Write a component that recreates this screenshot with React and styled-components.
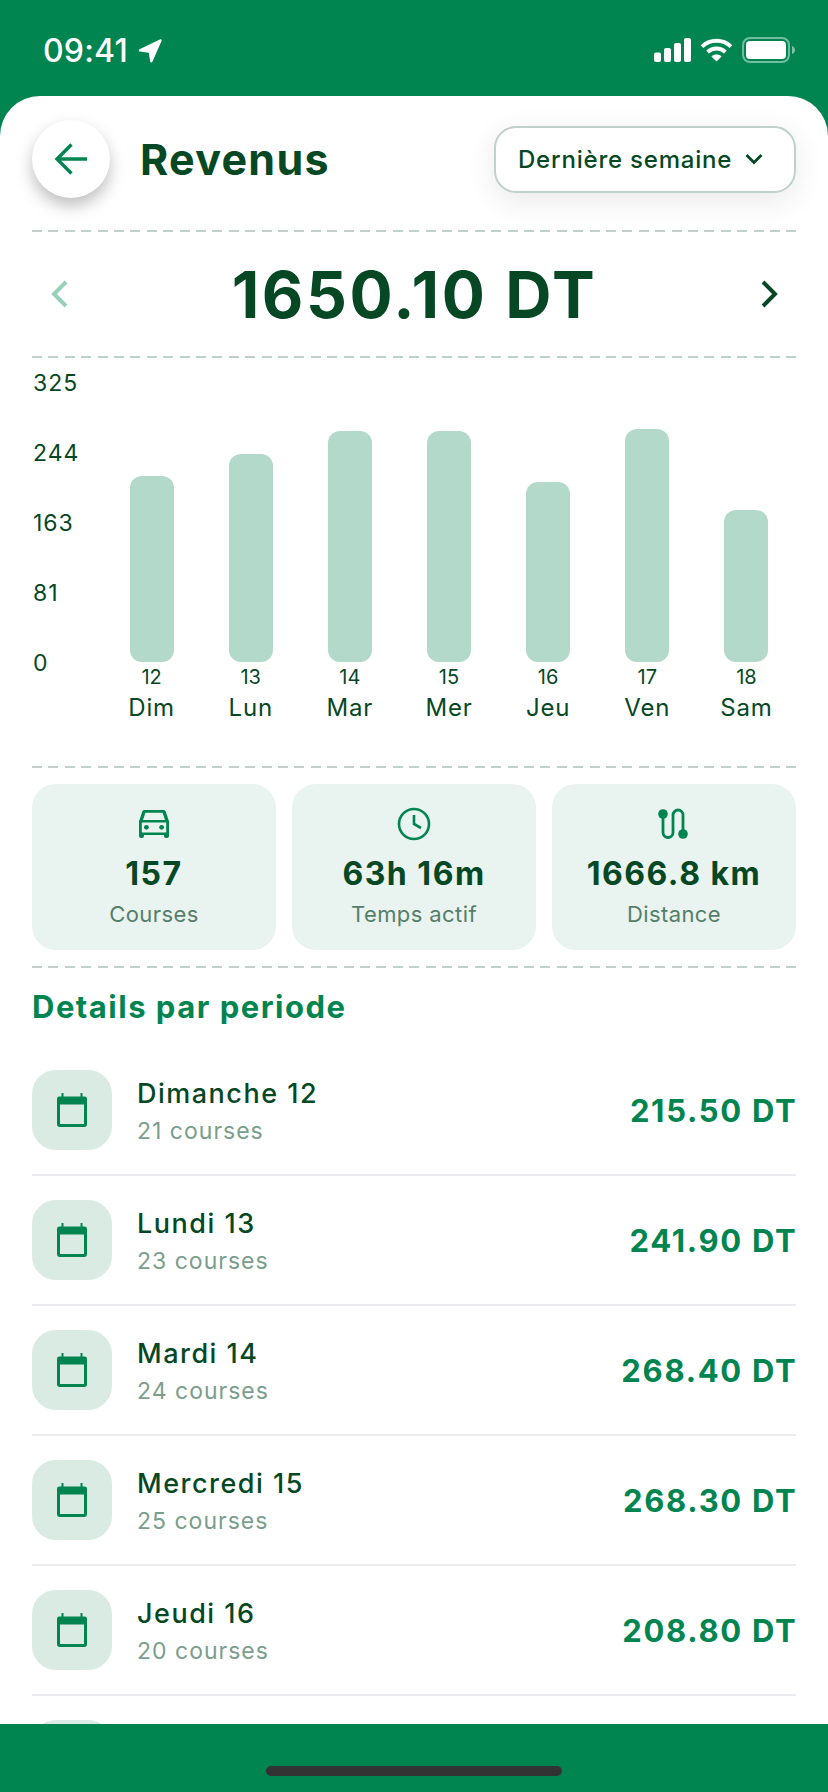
import styled, { createGlobalStyle } from "styled-components";

const GREEN = "#008551";
const DARK = "#064824";

const GlobalStyle = createGlobalStyle`
  html, body {
    margin: 0;
    padding: 0;
    background: ${GREEN};
  }
  * {
    box-sizing: border-box;
  }
`;

const days = [
  { num: 12, short: "Dim", long: "Dimanche", rides: 21, amount: 215.5 },
  { num: 13, short: "Lun", long: "Lundi", rides: 23, amount: 241.9 },
  { num: 14, short: "Mar", long: "Mardi", rides: 24, amount: 268.4 },
  { num: 15, short: "Mer", long: "Mercredi", rides: 25, amount: 268.3 },
  { num: 16, short: "Jeu", long: "Jeudi", rides: 20, amount: 208.8 },
  { num: 17, short: "Ven", amount: 270.4 },
  { num: 18, short: "Sam", amount: 177 },
];

const ticks = [325, 244, 163, 81, 0];
const PLOT_HEIGHT = 280;

const BackIcon = () => (
  <svg width="34" height="34" viewBox="0 0 34 34" fill="none" stroke={GREEN} strokeWidth="3.4">
    <path d="M33 17H3" />
    <path d="M17.500 2.500 3 17l14.500 14.500" />
  </svg>
);

const ChevronDown = () => (
  <svg width="20" height="12" viewBox="0 0 20 12" fill="none" stroke={DARK} strokeWidth="2.8">
    <path d="M2.500 2 10 9.500 17.500 2" />
  </svg>
);

const Chevron = ({ left, color }) => (
  <svg width="20" height="30" viewBox="0 0 20 30" fill="none" stroke={color} strokeWidth="4">
    <path d={left ? "M17 3 5 15l12 12" : "M3 3l12 12L3 27"} />
  </svg>
);

const CarIcon = () => (
  <svg width="32" height="28" viewBox="0 0 32 28" fill={GREEN}>
    <path d="M6.600 0h18.800c1.100 0 2 .7 2.300 1.600L31 11.200V26a2 2 0 0 1-2 2h-1a2 2 0 0 1-2-2v-1H6v1a2 2 0 0 1-2 2H3a2 2 0 0 1-2-2V11.200l3.300-9.600C4.600.7 5.500 0 6.600 0Zm.8 2.800L5 10h22l-2.400-7.200H7.400ZM3.800 12.600v9.800h24.400v-9.800H3.800Z" fillRule="evenodd" />
    <circle cx="8.400" cy="17.300" r="2.400" />
    <circle cx="23.600" cy="17.300" r="2.400" />
  </svg>
);

const ClockIcon = () => (
  <svg width="34" height="34" viewBox="0 0 34 34" fill="none" stroke={GREEN} strokeWidth="2.6">
    <circle cx="17" cy="17" r="15" />
    <path d="M17 8v9l7 4" />
  </svg>
);

const RouteIcon = () => (
  <svg width="32" height="32" viewBox="0 0 32 32" fill="none" stroke={GREEN} strokeWidth="2.800">
    <path d="M5 6v18.500a5 5 0 0 0 10 0V7a5 5 0 0 1 10 0v18" />
    <circle cx="5" cy="6" r="4.800" fill={GREEN} stroke="none" />
    <circle cx="25" cy="26" r="4.800" fill={GREEN} stroke="none" />
  </svg>
);

const CalendarIcon = () => (
  <svg width="30" height="34" viewBox="0 0 30 34" fill={GREEN}>
    <path fillRule="evenodd" d="M4.500 0h2v3.400h17V0h2v3.400h2.100A2.400 2.400 0 0 1 30 5.800v25.800a2.400 2.400 0 0 1-2.400 2.400H2.400A2.400 2.400 0 0 1 0 31.600V5.800a2.400 2.400 0 0 1 2.400-2.400h2.100V0ZM3 11.400v19.600h24V11.400H3Z" />
  </svg>
);

const LocationIcon = () => (
  <svg width="24" height="24" viewBox="0 0 25 25" fill="#fff">
    <path d="M22.800.4c1.100-.5 2.200.6 1.700 1.700L15 23.600c-.5 1.100-2.100 1-2.300-.2l-1.500-9.200L1.800 13c-1.200-.2-1.300-1.800-.2-2.300L22.800.4Z" />
  </svg>
);

const SignalIcon = () => (
  <svg width="37" height="24" viewBox="0 0 37 24" fill="#fff">
    <rect x="0" y="14.500" width="7" height="9.500" rx="2" />
    <rect x="10" y="10" width="7" height="14" rx="2" />
    <rect x="20" y="5" width="7" height="19" rx="2" />
    <rect x="30" y="0" width="7" height="24" rx="2" />
  </svg>
);

const WifiIcon = () => (
  <svg width="33" height="24" viewBox="0 0 33 24" fill="none" stroke="#fff" strokeWidth="4">
    <path d="M2 8.600C10.200.8 22.800.8 31 8.600" />
    <path d="M7.600 14c5-4.600 12.800-4.600 17.800 0" />
    <path d="M16.500 23.500 11.400 18.400c3-2.400 7.200-2.400 10.200 0Z" fill="#fff" stroke="none" />
  </svg>
);

const BatteryIcon = () => (
  <svg width="54" height="26" viewBox="0 0 54 26" fill="none">
    <rect x="1" y="1" width="46" height="24" rx="7" stroke="#fff" strokeOpacity=".45" strokeWidth="2" />
    <rect x="4" y="4" width="40" height="18" rx="4" fill="#fff" />
    <path d="M50 9v8c1.600-.6 3-2 3-4s-1.400-3.400-3-4Z" fill="#fff" fillOpacity=".5" />
  </svg>
);

const App = () => {
  return (
    <Screen>
      <GlobalStyle />
      <StatusBar>
        <Clock>
          09:41
          <LocationIcon />
        </Clock>
        <StatusIcons>
          <SignalIcon />
          <WifiIcon />
          <BatteryIcon />
        </StatusIcons>
      </StatusBar>

      <Sheet>
        <Header>
          <BackButton>
            <BackIcon />
          </BackButton>
          <Title>Revenus</Title>
          <PeriodSelect>
            Dernière semaine
            <ChevronDown />
          </PeriodSelect>
        </Header>
        <Dashed />

        <TotalRow>
          <Chevron left color="#99D0B8" />
          <Total>1650.10 DT</Total>
          <Chevron color={DARK} />
        </TotalRow>
        <Dashed />

        <Chart>
          <YAxis>
            {ticks.map((t) => (
              <span key={t}>{t}</span>
            ))}
          </YAxis>
          <Columns>
            {days.map((d) => (
              <Column key={d.num}>
                <Plot>
                  <Bar style={{ height: (d.amount / 325) * PLOT_HEIGHT }} />
                </Plot>
                <DateNum>{d.num}</DateNum>
                <DayName>{d.short}</DayName>
              </Column>
            ))}
          </Columns>
        </Chart>
        <Dashed />

        <Stats>
          <StatCard>
            <StatIcon><CarIcon /></StatIcon>
            <StatValue>157</StatValue>
            <StatLabel>Courses</StatLabel>
          </StatCard>
          <StatCard>
            <StatIcon><ClockIcon /></StatIcon>
            <StatValue>63h 16m</StatValue>
            <StatLabel>Temps actif</StatLabel>
          </StatCard>
          <StatCard>
            <StatIcon><RouteIcon /></StatIcon>
            <StatValue>1666.8 km</StatValue>
            <StatLabel>Distance</StatLabel>
          </StatCard>
        </Stats>
        <Dashed />

        <SectionTitle>Details par periode</SectionTitle>
        <List>
          {days.slice(0, 5).map((d) => (
            <Row key={d.num}>
              <RowIcon>
                <CalendarIcon />
              </RowIcon>
              <RowText>
                <RowTitle>{d.long} {d.num}</RowTitle>
                <RowSub>{d.rides} courses</RowSub>
              </RowText>
              <RowAmount>{d.amount.toFixed(2)} DT</RowAmount>
            </Row>
          ))}
          {/* next row only peeks out above the bottom bar */}
          <Row>
            <RowIcon />
          </Row>
        </List>
      </Sheet>

      <BottomBar>
        <HomeIndicator />
      </BottomBar>
    </Screen>
  );
};

const Screen = styled.div`
  width: 828px;
  height: 1792px;
  display: flex;
  flex-direction: column;
  overflow: hidden;
  background: ${GREEN};
  font-family: Inter, "Liberation Sans", sans-serif;
  font-optical-sizing: none;
  color: ${DARK};
`;

const StatusBar = styled.div`
  height: 96px;
  flex: none;
  display: flex;
  justify-content: space-between;
  align-items: flex-start;
  padding: 33px 32px 0 43px;
`;

const Clock = styled.div`
  display: flex;
  align-items: center;
  gap: 10px;
  color: #fff;
  font-size: 32px;
  font-weight: 500;
  line-height: 36px;
  letter-spacing: 0.2px;
`;

const StatusIcons = styled.div`
  display: flex;
  align-items: center;
  gap: 9px;
  padding-top: 4px;
`;

const Sheet = styled.div`
  flex: 1;
  min-height: 0;
  overflow: hidden;
  background: #fff;
  border-radius: 40px 40px 0 0;
  padding: 0 32px;
`;

const Header = styled.div`
  display: flex;
  align-items: center;
  padding-top: 24px;
  height: 134px;
  padding-bottom: 32px;
`;

const BackButton = styled.div`
  width: 78px;
  height: 78px;
  flex: none;
  border-radius: 50%;
  background: #fff;
  display: flex;
  align-items: center;
  justify-content: center;
  box-shadow: 0 8px 16px rgba(0, 0, 0, 0.25);
`;

const Title = styled.h1`
  margin: 0 0 0 30px;
  flex: 1;
  font-size: 43px;
  font-weight: 700;
  letter-spacing: 1.3px;
`;

const PeriodSelect = styled.div`
  width: 302px;
  height: 67px;
  flex: none;
  display: flex;
  align-items: center;
  justify-content: space-between;
  padding: 0 30px 0 22px;
  background: #fff;
  border: 2px solid #bfd1c8;
  border-radius: 22px;
  font-size: 24px;
  font-weight: 500;
  letter-spacing: 0.8px;
  box-shadow: 0 8px 30px rgba(0, 0, 0, 0.09);
`;

const Dashed = styled.div`
  height: 2px;
  background: repeating-linear-gradient(90deg, #bfd1c8 0 10px, transparent 10px 16.4px);
`;

const TotalRow = styled.div`
  height: 124px;
  display: flex;
  align-items: center;
  justify-content: space-between;
  padding: 0 16px 0 17px;
`;

const Total = styled.div`
  font-size: 64px;
  font-weight: 700;
  letter-spacing: 2.6px;
`;

const Chart = styled.div`
  height: 408px;
  display: flex;
  align-items: flex-start;
`;

const YAxis = styled.div`
  width: 70px;
  height: 304px;
  margin-top: 13px;
  padding-left: 1px;
  display: flex;
  flex-direction: column;
  justify-content: space-between;
  font-size: 23px;
  line-height: 24px;
  letter-spacing: 1px;
`;

const Columns = styled.div`
  flex: 1;
  display: grid;
  grid-template-columns: repeat(7, 1fr);
  padding-top: 24px;
`;

const Column = styled.div`
  display: flex;
  flex-direction: column;
  align-items: center;
`;

const Plot = styled.div`
  height: ${PLOT_HEIGHT}px;
  display: flex;
  align-items: flex-end;
`;

const Bar = styled.div`
  width: 44px;
  background: #b2d9c9;
  border-radius: 12px;
`;

const DateNum = styled.div`
  margin-top: 3px;
  font-size: 20px;
  line-height: 24px;
`;

const DayName = styled.div`
  margin-top: 3px;
  font-size: 24px;
  line-height: 32px;
  letter-spacing: 0.8px;
`;

const Stats = styled.div`
  display: grid;
  grid-template-columns: repeat(3, 1fr);
  gap: 16px;
  padding: 16px 0;
`;

const StatCard = styled.div`
  height: 166px;
  background: #e9f3ef;
  border-radius: 24px;
  display: flex;
  flex-direction: column;
  align-items: center;
  padding-top: 22px;
`;

const StatIcon = styled.div`
  height: 36px;
  display: flex;
  align-items: center;
  justify-content: center;
`;

const StatValue = styled.div`
  margin-top: 12px;
  font-size: 32px;
  font-weight: 700;
  line-height: 40px;
  letter-spacing: 1.5px;
`;

const StatLabel = styled.div`
  margin-top: 6px;
  font-size: 22px;
  line-height: 28px;
  letter-spacing: 0.4px;
  color: #557f6a;
`;

const SectionTitle = styled.h2`
  margin: 0;
  height: 102px;
  padding-top: 20px;
  font-size: 31px;
  line-height: 38px;
  font-weight: 700;
  letter-spacing: 1.5px;
  color: ${GREEN};
`;

const List = styled.div`
  display: flex;
  flex-direction: column;
`;

const Row = styled.div`
  display: flex;
  align-items: center;
  padding-bottom: 24px;
  margin-bottom: 24px;
  border-bottom: 2px solid #ebebf0;
`;

const RowIcon = styled.div`
  width: 80px;
  height: 80px;
  flex: none;
  border-radius: 24px;
  background: #daebe3;
  display: flex;
  align-items: center;
  justify-content: center;
`;

const RowText = styled.div`
  flex: 1;
  margin-left: 25px;
  padding-top: 2px;
`;

const RowTitle = styled.div`
  font-size: 27px;
  font-weight: 500;
  line-height: 36px;
  letter-spacing: 1.5px;
`;

const RowSub = styled.div`
  margin-top: 4px;
  font-size: 23px;
  line-height: 30px;
  letter-spacing: 1px;
  color: #7a9e8c;
`;

const RowAmount = styled.div`
  margin-right: -1.5px;
  font-size: 31px;
  font-weight: 700;
  letter-spacing: 1.7px;
  color: ${GREEN};
`;

const BottomBar = styled.div`
  height: 68px;
  flex: none;
  background: ${GREEN};
  display: flex;
  justify-content: center;
  padding-top: 42px;
`;

const HomeIndicator = styled.div`
  width: 296px;
  height: 10px;
  border-radius: 5px;
  background: #333;
`;

export default App;
